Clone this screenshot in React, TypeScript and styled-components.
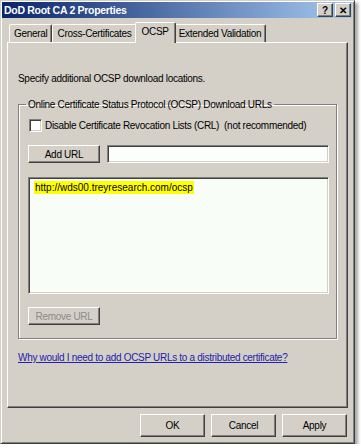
import React from 'react';
import styled, { createGlobalStyle, css } from 'styled-components';

const GlobalStyle = createGlobalStyle`
  body {
    margin: 0;
    background: #ffffff;
    font-family: "Liberation Sans", Arial, sans-serif;
    font-size: 10px;
    letter-spacing: -0.3px;
    color: #000;
  }
`;

const raised = css`
  border: 1px solid;
  border-color: #ffffff #404040 #404040 #ffffff;
  box-shadow: inset -1px -1px 0 #808080, inset 1px 1px 0 #d4d0c8;
`;

const sunken = css`
  border: 1px solid;
  border-color: #808080 #ffffff #ffffff #808080;
  box-shadow: inset 1px 1px 0 #404040, inset -1px -1px 0 #d4d0c8;
`;

const Window = styled.div`
  box-sizing: border-box;
  width: 355px;
  height: 444px;
  background: #d4d0c8;
  border: 1px solid;
  border-color: #d4d0c8 #404040 #404040 #d4d0c8;
  box-shadow: inset 1px 1px 0 #ffffff, inset -1px -1px 0 #808080, 3px 3px 3px rgba(0, 0, 0, 0.35);
  padding: 1px 2px 2px 1px;
  display: flex;
  flex-direction: column;
`;

const TitleBar = styled.div`
  height: 19px;
  display: flex;
  align-items: center;
  padding: 0 1px 0 2px;
  background: linear-gradient(to right, #0a246a, #a6caf0);
  color: #fff;
  font-weight: bold;
  font-size: 10.5px;
`;

const TitleText = styled.div`
  flex: 1;
`;

const CaptionButton = styled.div`
  box-sizing: border-box;
  width: 16px;
  height: 14px;
  margin-left: 2px;
  background: #d4d0c8;
  ${raised};
  color: #000;
  display: flex;
  align-items: center;
  justify-content: center;
  font-size: 10px;
  font-weight: bold;
`;

const Body = styled.div`
  flex: 1;
  display: flex;
  flex-direction: column;
  padding: 3px 4px 4px 5px;
`;

const TabStrip = styled.div`
  display: flex;
  align-items: flex-end;
  height: 21px;
  padding-left: 2px;
  position: relative;
  z-index: 1;
`;

const Tab = styled.div<{ $active?: boolean }>`
  box-sizing: border-box;
  height: ${(p) => (p.$active ? '21px' : '18px')};
  padding: 0 ${(p) => (p.$active ? '6px' : '4px')};
  margin: 0 ${(p) => (p.$active ? '-2px' : '0')};
  background: #d4d0c8;
  border: 1px solid;
  border-bottom: none;
  border-color: #ffffff #404040 transparent #ffffff;
  border-radius: 2px 2px 0 0;
  box-shadow: inset -1px 0 0 #808080;
  display: flex;
  align-items: ${(p) => (p.$active ? 'flex-start' : 'center')};
  padding-top: ${(p) => (p.$active ? '3px' : '0')};
  margin-bottom: ${(p) => (p.$active ? '-1px' : '0')};
  position: relative;
  z-index: ${(p) => (p.$active ? 2 : 1)};
`;

const Panel = styled.div`
  box-sizing: border-box;
  height: 366px;
  border: 1px solid;
  border-color: #ffffff #404040 #404040 #ffffff;
  box-shadow: inset -1px -1px 0 #808080;
  padding: 29px 10px 0 10px;
  display: flex;
  flex-direction: column;
`;

const Intro = styled.div`
  height: 14px;
  line-height: 14px;
`;

const Group = styled.fieldset`
  margin: 12px 0 0 0;
  padding: 0 7px 0 9px;
  border: 1px solid #808080;
  box-shadow: 1px 1px 0 #ffffff, inset 1px 1px 0 #ffffff;
  height: 241px;
  box-sizing: border-box;
  display: flex;
  flex-direction: column;
  min-width: 0;
`;

const Legend = styled.legend`
  padding: 0 2px;
  margin-left: -2px;
  line-height: 13px;
  white-space: nowrap;
`;

const CheckRow = styled.label`
  display: flex;
  align-items: center;
  gap: 3px;
  margin: 7px 0 0 1px;
  height: 15px;
  white-space: nowrap;
`;

const CheckBox = styled.span`
  box-sizing: border-box;
  flex-shrink: 0;
  width: 13px;
  height: 13px;
  background: #fff;
  ${sunken};
`;

const AddRow = styled.div`
  display: flex;
  gap: 7px;
  margin-top: 12px;
  height: 18px;
`;

const Button = styled.div<{ $disabled?: boolean; $w?: number; $h?: number }>`
  box-sizing: border-box;
  width: ${(p) => p.$w ?? 72}px;
  height: ${(p) => p.$h ?? 18}px;
  background: #d4d0c8;
  ${raised};
  display: flex;
  align-items: center;
  justify-content: center;
  color: ${(p) => (p.$disabled ? '#8a8a8a' : '#000')};
  white-space: nowrap;
  flex-shrink: 0;
`;

const TextBox = styled.div`
  box-sizing: border-box;
  flex: 1;
  background: #fcfefc;
  ${sunken};
`;

const ListBox = styled.div`
  box-sizing: border-box;
  margin-top: 14px;
  height: 117px;
  background: #f8fdf8;
  ${sunken};
  padding: 3px 5px;
`;

const Highlight = styled.span`
  background: #ffff00;
  line-height: 14px;
  padding: 1px 1px;
  letter-spacing: 0;
`;

const RemoveRow = styled.div`
  margin-top: 13px;
`;

const HelpLink = styled.a`
  margin-top: 12px;
  color: #2222a8;
  text-decoration: underline;
  line-height: 14px;
  white-space: nowrap;
`;

const Footer = styled.div`
  display: flex;
  justify-content: flex-end;
  gap: 6px;
  margin-top: 6px;
  padding-right: 1px;
`;

export default function App() {
  return (
    <>
      <GlobalStyle />
      <Window>
        <TitleBar>
          <TitleText>DoD Root CA 2 Properties</TitleText>
          <CaptionButton>?</CaptionButton>
          <CaptionButton>✕</CaptionButton>
        </TitleBar>
        <Body>
          <TabStrip>
            <Tab>General</Tab>
            <Tab>Cross-Certificates</Tab>
            <Tab $active>OCSP</Tab>
            <Tab>Extended Validation</Tab>
          </TabStrip>
          <Panel>
            <Intro>Specify additional OCSP download locations.</Intro>
            <Group>
              <Legend>Online Certificate Status Protocol (OCSP) Download URLs</Legend>
              <CheckRow>
                <CheckBox />
                Disable Certificate Revocation Lists (CRL)&nbsp; (not recommended)
              </CheckRow>
              <AddRow>
                <Button>Add URL</Button>
                <TextBox />
              </AddRow>
              <ListBox>
                <Highlight>http://wds00.treyresearch.com/ocsp</Highlight>
              </ListBox>
              <RemoveRow>
                <Button $disabled>Remove URL</Button>
              </RemoveRow>
            </Group>
            <HelpLink href="#">Why would I need to add OCSP URLs to a distributed certificate?</HelpLink>
          </Panel>
          <Footer>
            <Button $w={65} $h={23}>OK</Button>
            <Button $w={65} $h={23}>Cancel</Button>
            <Button $w={65} $h={23}>Apply</Button>
          </Footer>
        </Body>
      </Window>
    </>
  );
}
